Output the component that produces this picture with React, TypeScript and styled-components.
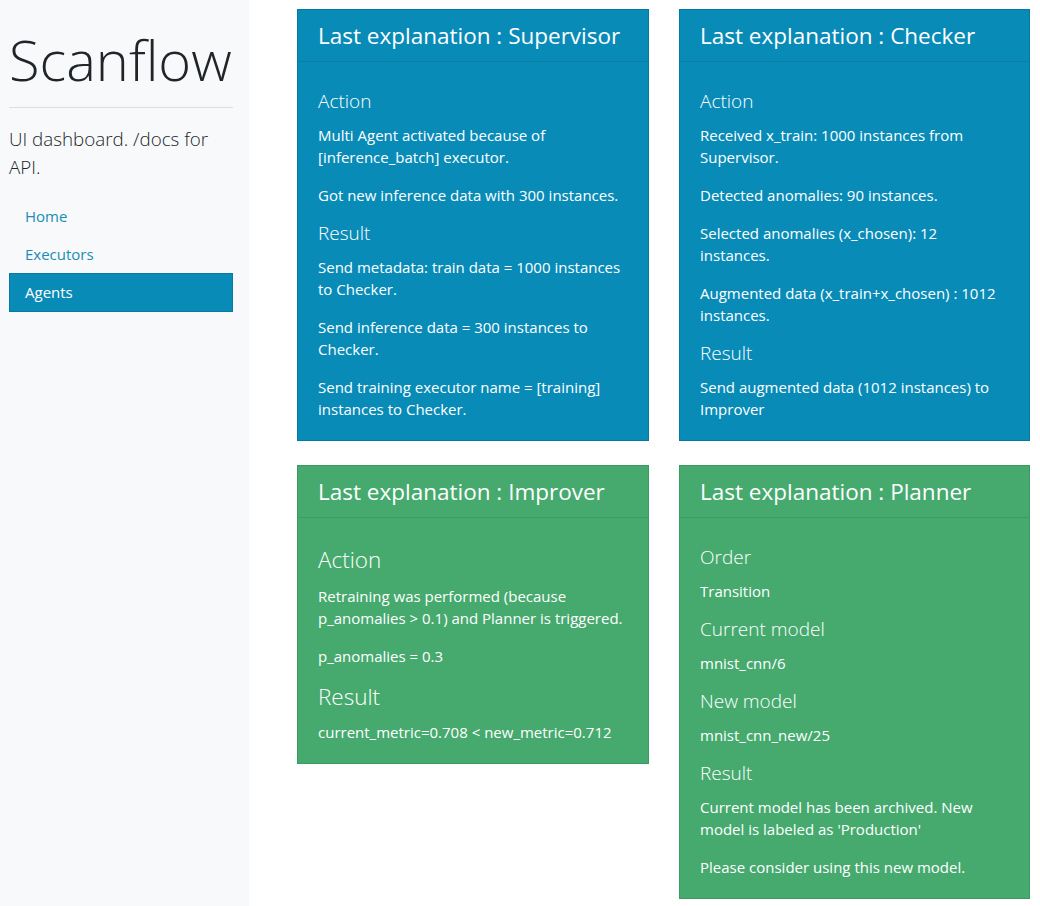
import styled, { createGlobalStyle } from "styled-components";
import { FC } from "react";

const GlobalStyle = createGlobalStyle`
  html, body {
    margin: 0;
    padding: 0;
    background: #ffffff;
    font-family: "Open Sans", "Noto Sans", sans-serif;
    color: #212529;
  }
  * {
    box-sizing: border-box;
  }
`;

const Layout = styled.div`
  display: flex;
  min-height: 906px;
`;

const Sidebar = styled.aside`
  width: 249px;
  flex-shrink: 0;
  background-color: #f8f9fa;
  padding: 0 16px 0 9px;
`;

const Brand = styled.h1`
  font-size: 56px;
  font-weight: 300;
  line-height: 1.2;
  margin: 26px 0 0;
  color: #212529;
`;

const Rule = styled.hr`
  border: 0;
  border-top: 1px solid #dcdee0;
  margin: 14px 0 17px;
`;

const Lead = styled.p`
  font-size: 18.8px;
  font-weight: 300;
  line-height: 28px;
  margin: 0 0 16px;
  color: #212529;
`;

const Nav = styled.nav`
  display: flex;
  flex-direction: column;
`;

const NavLink = styled.a<{ $active?: boolean }>`
  display: block;
  padding: 7px 15px;
  font-size: 15px;
  line-height: 22px;
  height: ${(p) => (p.$active ? "39px" : "38px")};
  text-decoration: none;
  color: ${(p) => (p.$active ? "#ffffff" : "#1a8db7")};
  background-color: ${(p) => (p.$active ? "#098bb8" : "transparent")};
  border: 1px solid ${(p) => (p.$active ? "#0a7aa2" : "transparent")};
`;

const Main = styled.main`
  flex: 1;
  padding: 9px 10px 8px 48px;
`;

const Grid = styled.div`
  display: grid;
  grid-template-columns: 352px 351px;
  column-gap: 30px;
  row-gap: 24px;
  align-items: start;
`;

const Card = styled.section<{ $tone: "blue" | "green" }>`
  color: #ffffff;
  background-color: ${(p) => (p.$tone === "blue" ? "#098bb8" : "#46aa6e")};
  border: 1px solid ${(p) => (p.$tone === "blue" ? "#0779a1" : "#3d9962")};
`;

const CardHeader = styled.header<{ $tone: "blue" | "green" }>`
  height: 52px;
  padding: 0 20px 1px;
  display: flex;
  align-items: center;
  font-size: 22.5px;
  font-weight: 400;
  border-bottom: 1px solid ${(p) => (p.$tone === "blue" ? "#0b7ea6" : "#3f9b64")};
`;

const CardBody = styled.div`
  padding: 20px 20px 4px;
`;

const Heading = styled.h4<{ $big?: boolean }>`
  font-weight: 300;
  font-size: ${(p) => (p.$big ? "22.5px" : "19px")};
  line-height: ${(p) => (p.$big ? "27px" : "22px")};
  margin: ${(p) => (p.$big ? "8px 0 11.5px" : "8px 0 12px")};
`;

const Text = styled.p`
  font-size: 15px;
  line-height: 22px;
  margin: 0 0 16px;
`;

type Section = { title: string; lines: string[] };
type Agent = {
  name: string;
  tone: "blue" | "green";
  big?: boolean;
  sections: Section[];
};

const agents: Agent[] = [
  {
    name: "Supervisor",
    tone: "blue",
    sections: [
      {
        title: "Action",
        lines: [
          "Multi Agent activated because of [inference_batch] executor.",
          "Got new inference data with 300 instances.",
        ],
      },
      {
        title: "Result",
        lines: [
          "Send metadata: train data = 1000 instances to Checker.",
          "Send inference data = 300 instances to Checker.",
          "Send training executor name = [training] instances to Checker.",
        ],
      },
    ],
  },
  {
    name: "Checker",
    tone: "blue",
    sections: [
      {
        title: "Action",
        lines: [
          "Received x_train: 1000 instances from Supervisor.",
          "Detected anomalies: 90 instances.",
          "Selected anomalies (x_chosen): 12 instances.",
          "Augmented data (x_train+x_chosen) : 1012 instances.",
        ],
      },
      {
        title: "Result",
        lines: ["Send augmented data (1012 instances) to Improver"],
      },
    ],
  },
  {
    name: "Improver",
    tone: "green",
    big: true,
    sections: [
      {
        title: "Action",
        lines: [
          "Retraining was performed (because p_anomalies > 0.1) and Planner is triggered.",
          "p_anomalies = 0.3",
        ],
      },
      {
        title: "Result",
        lines: ["current_metric=0.708 < new_metric=0.712"],
      },
    ],
  },
  {
    name: "Planner",
    tone: "green",
    sections: [
      { title: "Order", lines: ["Transition"] },
      { title: "Current model", lines: ["mnist_cnn/6"] },
      { title: "New model", lines: ["mnist_cnn_new/25"] },
      {
        title: "Result",
        lines: [
          "Current model has been archived. New model is labeled as 'Production'",
          "Please consider using this new model.",
        ],
      },
    ],
  },
];

const AgentCard: FC<{ agent: Agent }> = ({ agent }) => (
  <Card $tone={agent.tone}>
    <CardHeader $tone={agent.tone}>Last explanation : {agent.name}</CardHeader>
    <CardBody>
      {agent.sections.map((s) => (
        <div key={s.title}>
          <Heading $big={agent.big}>{s.title}</Heading>
          {s.lines.map((l, i) => (
            <Text key={i}>{l}</Text>
          ))}
        </div>
      ))}
    </CardBody>
  </Card>
);

const App: FC = () => (
  <>
    <GlobalStyle />
    <Layout>
      <Sidebar>
        <Brand>Scanflow</Brand>
        <Rule />
        <Lead>UI dashboard. /docs for API.</Lead>
        <Nav>
          <NavLink href="#">Home</NavLink>
          <NavLink href="#">Executors</NavLink>
          <NavLink href="#" $active>
            Agents
          </NavLink>
        </Nav>
      </Sidebar>
      <Main>
        <Grid>
          {agents.map((a) => (
            <AgentCard key={a.name} agent={a} />
          ))}
        </Grid>
      </Main>
    </Layout>
  </>
);

export default App;
